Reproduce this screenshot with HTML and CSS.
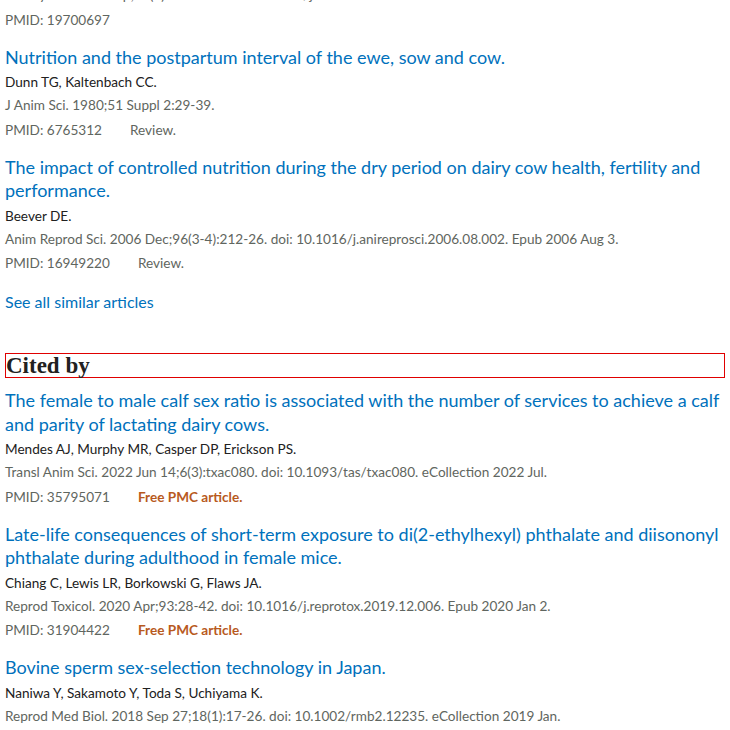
FILE: index.html
```html
<!DOCTYPE html>
<html lang="en">
<head>
<meta charset="utf-8">
<title>Similar articles and cited by</title>
<link rel="stylesheet" href="styles.css">
</head>
<body>
<main class="page">
  <section class="list similar">
    <article class="docsum clipped">
      <div class="citation">J Dairy Sci. 2009 Sep;92(9):4575-85. doi: 10.3168/jds.2009-1996.</div>
      <div class="meta"><span class="pmid">PMID: 19700697</span></div>
    </article>
    <article class="docsum">
      <a class="title" href="#">Nutrition and the postpartum interval of the ewe, sow and cow.</a>
      <div class="authors">Dunn TG, Kaltenbach CC.</div>
      <div class="citation">J Anim Sci. 1980;51 Suppl 2:29-39.</div>
      <div class="meta"><span class="pmid">PMID: 6765312</span><span class="type">Review.</span></div>
    </article>
    <article class="docsum">
      <a class="title" href="#">The impact of controlled nutrition during the dry period on dairy cow health, fertility and performance.</a>
      <div class="authors">Beever DE.</div>
      <div class="citation">Anim Reprod Sci. 2006 Dec;96(3-4):212-26. doi: 10.1016/j.anireprosci.2006.08.002. Epub 2006 Aug 3.</div>
      <div class="meta"><span class="pmid">PMID: 16949220</span><span class="type">Review.</span></div>
    </article>
    <a class="see-all" href="#">See all similar articles</a>
  </section>

  <section class="list cited">
    <h2 class="heading">Cited by</h2>
    <article class="docsum">
      <a class="title" href="#">The female to male calf sex ratio is associated with the number of services to achieve a calf and parity of lactating dairy cows.</a>
      <div class="authors">Mendes AJ, Murphy MR, Casper DP, Erickson PS.</div>
      <div class="citation">Transl Anim Sci. 2022 Jun 14;6(3):txac080. doi: 10.1093/tas/txac080. eCollection 2022 Jul.</div>
      <div class="meta"><span class="pmid">PMID: 35795071</span><span class="free">Free PMC article.</span></div>
    </article>
    <article class="docsum">
      <a class="title" href="#">Late-life consequences of short-term exposure to di(2-ethylhexyl) phthalate and diisononyl phthalate during adulthood in female mice.</a>
      <div class="authors">Chiang C, Lewis LR, Borkowski G, Flaws JA.</div>
      <div class="citation">Reprod Toxicol. 2020 Apr;93:28-42. doi: 10.1016/j.reprotox.2019.12.006. Epub 2020 Jan 2.</div>
      <div class="meta"><span class="pmid">PMID: 31904422</span><span class="free">Free PMC article.</span></div>
    </article>
    <article class="docsum">
      <a class="title" href="#">Bovine sperm sex-selection technology in Japan.</a>
      <div class="authors">Naniwa Y, Sakamoto Y, Toda S, Uchiyama K.</div>
      <div class="citation">Reprod Med Biol. 2018 Sep 27;18(1):17-26. doi: 10.1002/rmb2.12235. eCollection 2019 Jan.</div>
    </article>
  </section>
</main>
</body>
</html>
```
FILE: styles.css
```css
html, body {
  margin: 0;
  padding: 0;
  background: #ffffff;
}

body {
  font-family: Lato, "Open Sans", sans-serif;
  color: #212121;
  overflow: hidden;
}

.page {
  padding: 0 5px;
  margin-top: -16px;
}

.list {
  display: flex;
  flex-direction: column;
}

.docsum {
  display: flex;
  flex-direction: column;
  padding-bottom: 14px;
}

.title {
  color: #0071bc;
  text-decoration: none;
  font-size: 18px;
  line-height: 23.5px;
  padding-bottom: 1px;
}

.authors {
  font-size: 13.6px;
  line-height: 24px;
  color: #212121;
}

.citation {
  font-size: 13.6px;
  line-height: 23.5px;
  color: #5f6660;
}

.meta {
  font-size: 13.6px;
  line-height: 24px;
  color: #5f6660;
  display: flex;
}

.type {
  margin-left: 28px;
}

.free {
  margin-left: 28px;
  color: #b85a1e;
  font-weight: bold;
}

.see-all {
  color: #0071bc;
  text-decoration: none;
  font-size: 16px;
  line-height: 24px;
  margin-top: 1px;
  align-self: flex-start;
}

.cited {
  margin-top: 39px;
}

.heading {
  margin: 0 0 11px 0;
  border: 1px solid #e00000;
  font-family: "Liberation Serif", serif;
  font-size: 23px;
  font-weight: bold;
  line-height: 23px;
  color: #212121;
}
```
